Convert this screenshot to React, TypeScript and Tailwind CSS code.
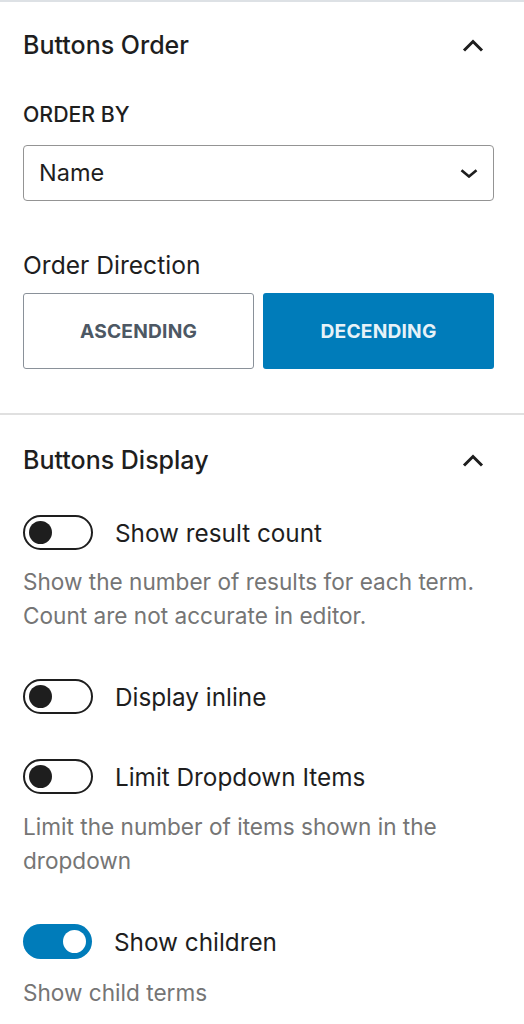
import React from "react";

const ChevronUp = () => (
  <svg width="22" height="13" viewBox="0 0 22 13" fill="none">
    <path d="M2 11.5 L11 2.5 L20 11.5" stroke="#1e1e1e" strokeWidth="3" />
  </svg>
);

const ChevronDown = () => (
  <svg width="18" height="9" viewBox="0 0 18 9" fill="none">
    <path d="M1.5 1.2 L9 7.5 L16.5 1.2" stroke="#1e1e1e" strokeWidth="2.6" />
  </svg>
);

function Toggle({ on }: { on?: boolean }) {
  if (on) {
    return (
      <div className="flex h-[35px] w-[69px] shrink-0 items-center justify-end rounded-full bg-[#007cba] pr-[6px]">
        <div className="h-[23px] w-[23px] rounded-full bg-white" />
      </div>
    );
  }
  return (
    <div className="flex h-[35px] w-[70px] shrink-0 items-center rounded-full border-[2.3px] border-[#1e1e1e] bg-white pl-[4px]">
      <div className="h-[23px] w-[23px] rounded-full bg-[#1e1e1e]" />
    </div>
  );
}

function ToggleRow({ label, on }: { label: string; on?: boolean }) {
  return (
    <div className="flex h-[35px] items-center gap-[22px]">
      <Toggle on={on} />
      <span className="text-[24.3px] leading-[32px] text-[#1e1e1e]">{label}</span>
    </div>
  );
}

function Help({ children }: { children: React.ReactNode }) {
  return <p className="text-[22.6px] leading-[34px] text-[#757575]">{children}</p>;
}

export default function App() {
  return (
    <div
      className="w-[524px] min-h-[1024px] bg-white text-[#1e1e1e]"
      style={{ fontFamily: "Inter, 'Noto Sans', sans-serif" }}
    >
      {/* Section 1 */}
      <section className="border-t-[2px] border-[#dde1e5] pl-[23px] pr-[30px] pt-[27px] pb-[44px]">
        <div className="flex h-[32px] items-center justify-between">
          <h2 className="text-[25px] font-medium leading-[32px]">Buttons Order</h2>
          <div className="mr-[10px]">
            <ChevronUp />
          </div>
        </div>
        <div className="mt-[41px] text-[21.3px] font-medium uppercase leading-[24px]">Order By</div>
        <div className="mt-[19px] flex h-[56px] items-center justify-between rounded-[4px] border-[1.5px] border-[#949494] pl-[15px] pr-[15px]">
          <span className="text-[23.5px] leading-[32px]">Name</span>
          <ChevronDown />
        </div>
        <div className="mt-[48px] text-[24.6px] leading-[32px]">Order Direction</div>
        <div className="mt-[12px] grid grid-cols-2 gap-[9px]">
          <div className="flex h-[76px] items-center justify-center rounded-[3px] border-[1.5px] border-[#8a9199] bg-white text-[19.2px] font-bold tracking-[0.2px] text-[#4d5864]">
            ASCENDING
          </div>
          <div className="flex h-[76px] items-center justify-center rounded-[3px] bg-[#007cba] text-[19.2px] font-bold tracking-[0.2px] text-[#e6f2f8]">
            DECENDING
          </div>
        </div>
      </section>

      {/* Section 2 */}
      <section className="border-t-[2px] border-[#e0e0e0] pl-[23px] pr-[30px] pt-[29px] pb-[20px]">
        <div className="flex h-[32px] items-center justify-between">
          <h2 className="text-[25px] font-medium leading-[32px]">Buttons Display</h2>
          <div className="mr-[10px]">
            <ChevronUp />
          </div>
        </div>

        <div className="mt-[39px]">
          <ToggleRow label="Show result count" />
          <div className="mt-[15px]">
            <Help>
              Show the number of results for each term.
              <br />
              Count are not accurate in editor.
            </Help>
          </div>
        </div>

        <div className="mt-[46px]">
          <ToggleRow label="Display inline" />
        </div>

        <div className="mt-[45px]">
          <ToggleRow label="Limit Dropdown Items" />
          <div className="mt-[16px]">
            <Help>
              Limit the number of items shown in the
              <br />
              dropdown
            </Help>
          </div>
        </div>

        <div className="mt-[46px]">
          <ToggleRow label="Show children" on />
          <div className="mt-[17px]">
            <Help>Show child terms</Help>
          </div>
        </div>
      </section>
    </div>
  );
}
